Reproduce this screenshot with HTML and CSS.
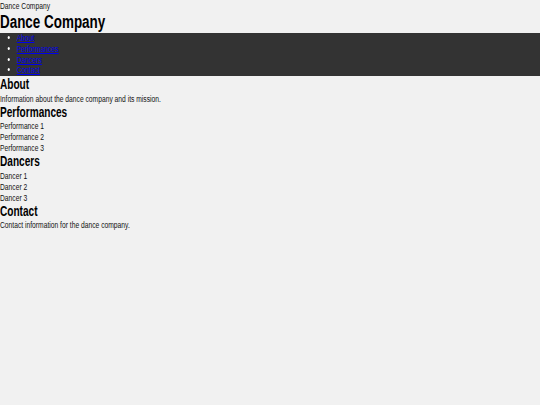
FILE: index.html
```html
<!DOCTYPE html>
<html>
<head>
<meta charset="utf-8">
<title>Dance Company</title>
<link rel="stylesheet" href="styles.css">
</head>
<body>
  <div class="doc-title cond">Dance Company</div>
  <header class="site-header">
    <h1 class="site-title cond">Dance Company</h1>
    <nav class="site-nav">
      <ul class="nav-list cond">
        <li><a href="#about">About</a></li>
        <li><a href="#performances">Performances</a></li>
        <li><a href="#dancers">Dancers</a></li>
        <li><a href="#contact">Contact</a></li>
      </ul>
    </nav>
  </header>
  <main class="cond">
    <section id="about" class="section">
      <h2 class="section-title">About</h2>
      <p class="text">Information about the dance company and its mission.</p>
    </section>
    <section id="performances" class="section">
      <h2 class="section-title">Performances</h2>
      <ul class="plain-list">
        <li>Performance 1</li>
        <li>Performance 2</li>
        <li>Performance 3</li>
      </ul>
    </section>
    <section id="dancers" class="section">
      <h2 class="section-title">Dancers</h2>
      <ul class="plain-list">
        <li>Dancer 1</li>
        <li>Dancer 2</li>
        <li>Dancer 3</li>
      </ul>
    </section>
    <section id="contact" class="section">
      <h2 class="section-title">Contact</h2>
      <p class="text">Contact information for the dance company.</p>
    </section>
  </main>
</body>
</html>
```
FILE: styles.css
```css
html, body {
  margin: 0;
  padding: 0;
  background: #f1f1f1;
}
body {
  font-family: "Liberation Sans", Arial, sans-serif;
  font-size: 9.6px;
  color: #111;
}
/* the reference text is horizontally condensed */
.cond {
  transform: scaleX(0.7);
  transform-origin: 0 0;
}
.doc-title {
  line-height: 11px;
}
.site-title {
  margin: 0;
  font-size: 19.2px;
  line-height: 22px;
  font-weight: bold;
  color: #000;
}
.site-nav {
  background: #333;
}
.nav-list {
  margin: 0;
  padding: 0 0 0 24px;
  list-style: disc;
  color: #fff;
  line-height: 10.75px;
}
.nav-list a {
  color: #0000ee;
}
.section-title {
  margin: 0;
  font-size: 14.4px;
  line-height: 16.5px;
  font-weight: bold;
  color: #000;
}
.text {
  margin: 0;
  line-height: 11px;
}
.plain-list {
  margin: 0;
  padding: 0;
  list-style: none;
  line-height: 11px;
}
```
